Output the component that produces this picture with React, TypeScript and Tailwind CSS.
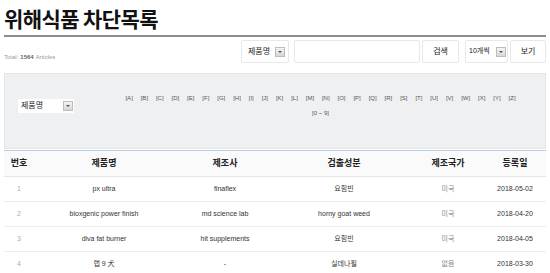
const letters = "ABCDEFGHIJKLMNOPQRSTUVWXYZ".split("");

const rows = [
    { no: 1, name: "px ultra", maker: "finaflex", found: "요힘빈", country: "미국", date: "2018-05-02" },
    { no: 2, name: "bioxgenic power finish", maker: "md science lab", found: "horny goat weed", country: "미국", date: "2018-04-20" },
    { no: 3, name: "diva fat burner", maker: "hit supplements", found: "요힘빈", country: "미국", date: "2018-04-05" },
    { no: 4, name: "랩 9 犬", maker: "-", found: "실데나필", country: "없음", date: "2018-03-30" },
];

const cols = "grid grid-cols-[30px_140px_102px_136px_72px_62px]";

const Arrow = () => (
    <span className="flex h-[10px] w-[10px] items-center justify-center border border-[#bdbdbd] bg-gradient-to-b from-[#f4f4f4] to-[#d6d6d6]">
        <span className="h-0 w-0 border-x-[2px] border-t-[2px] border-x-transparent border-t-[#555]" />
    </span>
);

const App = () => {
    return (
        <div
            className="min-h-[273px] bg-white px-1 text-[#333]"
            style={{ fontFamily: '"Liberation Sans", "Noto Sans CJK KR", sans-serif' }}
        >
            <h1 className="pt-[5px] text-[21px] font-bold leading-[26px] tracking-[-0.6px] text-[#111]" style={{ fontFamily: '"Noto Sans CJK KR", sans-serif' }}>
                위해식품 차단목록
            </h1>

            <div className="mt-[4px] h-[2px] bg-[#8c8c8c]" />

            {/* search bar */}
            <div className="mt-[3px] flex h-[23px] items-stretch">
                <p className="flex flex-1 items-end pb-[1px] text-[6px] text-[#9a9a9a]">
                    Total: <b className="mx-[2px] font-bold text-[#666]">1564</b> Articles
                </p>
                <div className="flex w-[48px] items-center justify-between rounded-[2px] border border-[#e8e8e8] pl-[6px] pr-[3px] text-[8px] text-[#222]">
                    제품명
                    <Arrow />
                </div>
                <div className="ml-[5px] w-[126px] rounded-[2px] border border-[#e8e8e8]" />
                <button className="ml-[2px] w-[37px] rounded-[2px] border border-[#e8e8e8] text-[8px] text-[#222]">검색</button>
                <div className="ml-[6px] flex w-[43px] items-center justify-between rounded-[2px] border border-[#e8e8e8] pl-[3px] pr-[1px] text-[7px] text-[#222]">
                    10개씩
                    <Arrow />
                </div>
                <button className="ml-[2px] w-[36px] rounded-[2px] border border-[#e8e8e8] text-[8px] text-[#222]">보기</button>
            </div>

            {/* initial filter */}
            <div className="mt-[10px] flex h-[76px] border border-[#e4e5e7] bg-[#eff0f2]">
                <div className="w-[91px] pl-[13px] pt-[25px]">
                    <div className="flex h-[14px] w-[56px] items-center justify-between bg-white pl-[3px] pr-[1px] text-[8px] text-[#222]">
                        제품명
                        <Arrow />
                    </div>
                </div>
                <div className="flex-1 pt-[17px] text-center">
                    <div className="flex flex-wrap justify-center gap-x-[7.9px] text-[6px] leading-[15px] text-[#555]">
                        {letters.map((l) => (
                            <span key={l}>[{l}]</span>
                        ))}
                    </div>
                    <div className="text-[6px] leading-[15px] text-[#555]">[0 ~ 9]</div>
                </div>
            </div>

            {/* table */}
            <div className="mt-[1px] border-t border-[#b7cde3]">
                <div className={`${cols} h-[26px] items-center border-b border-[#e6e6e6] bg-[#fafafa] text-center text-[9px] font-bold text-[#222]`}>
                    <span>번호</span>
                    <span>제품명</span>
                    <span>제조사</span>
                    <span>검출성분</span>
                    <span>제조국가</span>
                    <span>등록일</span>
                </div>
                {rows.map((r) => (
                    <div key={r.no} className={`${cols} h-[25px] items-center border-b border-[#ececec] text-center text-[7px] text-[#333]`}>
                        <span className="text-[#aaa]">{r.no}</span>
                        <span>{r.name}</span>
                        <span>{r.maker}</span>
                        <span>{r.found}</span>
                        <span className="text-[#888]">{r.country}</span>
                        <span>{r.date}</span>
                    </div>
                ))}
            </div>
        </div>
    );
};

export default App;
